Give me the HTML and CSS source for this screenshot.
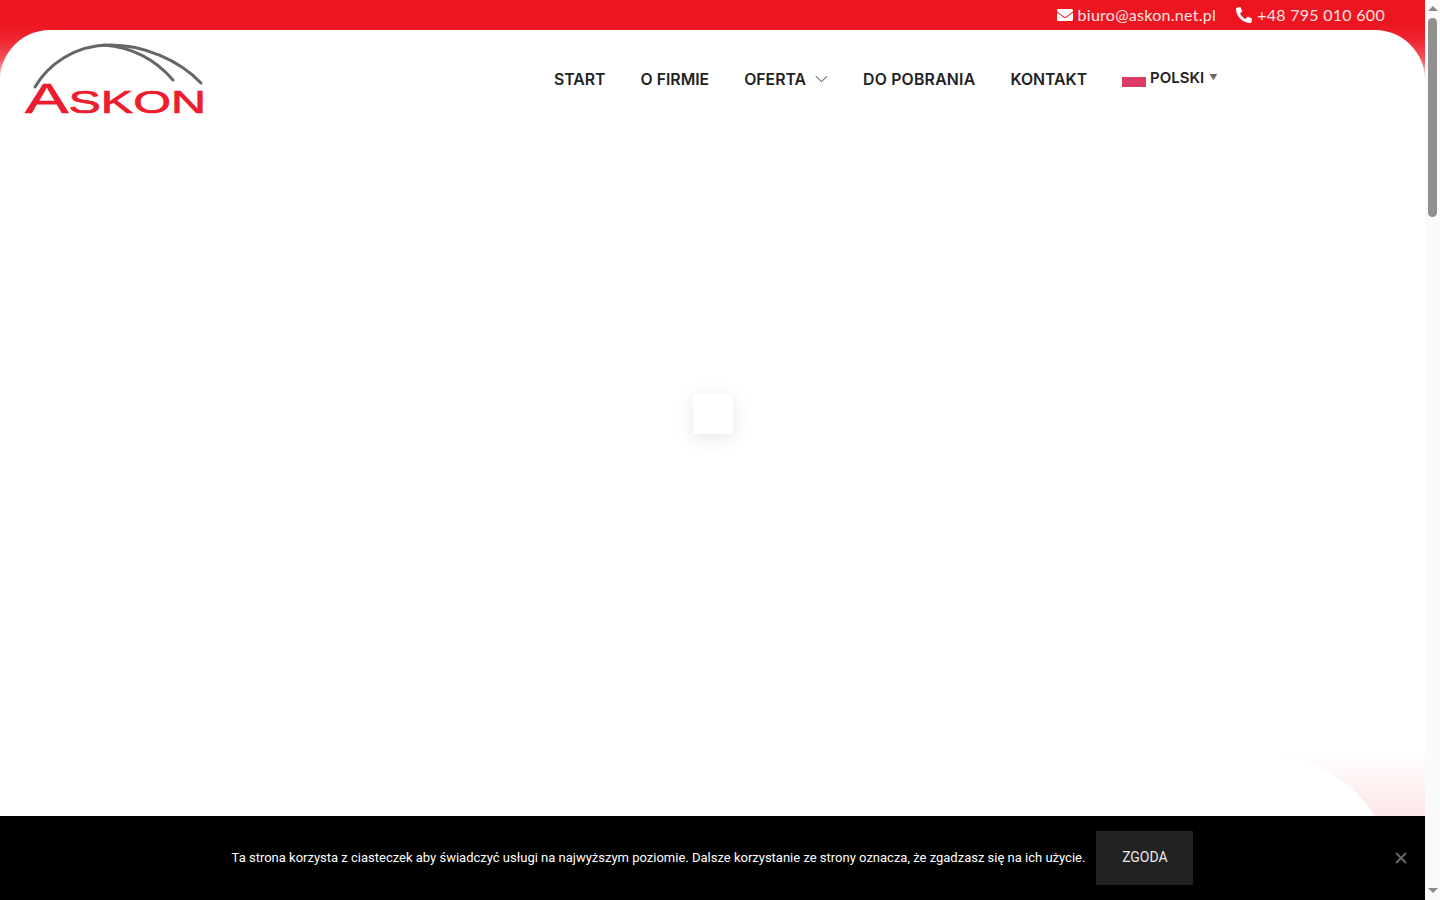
FILE: index.html
```html
<!DOCTYPE html>
<html lang="pl">
<head>
    <meta charset="UTF-8">
    <meta name="viewport" content="width=device-width, initial-scale=1.0">
    <title>Askon</title>
    <link rel="stylesheet" href="styles.css">
</head>
<body>
<div class="page">
    <div class="main">
        <!-- Naglowek -->
        <header class="header">
            <div class="topbar">
                <a class="contact">
                    <svg class="icon" viewBox="0 0 512 512"><path d="M502.3 190.8c3.9-3.1 9.7-.2 9.7 4.7V400c0 26.5-21.5 48-48 48H48c-26.5 0-48-21.5-48-48V195.6c0-5 5.7-7.8 9.7-4.7 22.4 17.4 52.1 39.5 154.1 113.6 21.1 15.4 56.7 47.8 92.2 47.6 35.7.3 72-32.8 92.3-47.6 102-74.1 131.6-96.3 154-113.7zM256 320c23.2.4 56.6-29.2 73.4-41.4 132.7-96.3 142.8-104.7 173.4-128.7 5.8-4.5 9.2-11.5 9.2-18.9v-19c0-26.5-21.5-48-48-48H48C21.5 64 0 85.5 0 112v19c0 7.4 3.4 14.3 9.2 18.9 30.6 23.9 40.7 32.4 173.4 128.7 16.8 12.2 50.2 41.8 73.4 41.4z"/></svg>
                    <span class="contact-text">biuro@askon.net.pl</span>
                </a>
                <a class="contact">
                    <svg class="icon" viewBox="0 0 512 512"><path transform="matrix(-1 0 0 1 512 0)" d="M493.4 24.6l-104-24c-11.3-2.6-22.9 3.3-27.5 13.9l-48 112c-4.2 9.8-1.4 21.3 6.9 28l60.6 49.6c-36 76.7-98.9 140.5-177.2 177.2l-49.6-60.6c-6.8-8.3-18.2-11.1-28-6.9l-112 48C3.9 366.5-2 378.1.6 389.4l24 104C27.1 504.2 36.7 512 48 512c256.1 0 464-207.5 464-464 0-11.2-7.7-20.9-18.6-23.4z"/></svg>
                    <span class="contact-text">+48 795 010 600</span>
                </a>
            </div>
            <div class="head">
                <svg class="logo" viewBox="0 0 182 74">
                    <path class="logo-arc" d="M11 45C24 23 50 3 86 3c34 0 69 15 91 38"/>
                    <path class="logo-arc" d="M80 3c25 2 50 13 69 35"/>
                    <text class="logo-text" x="1" y="71" textLength="181" lengthAdjust="spacingAndGlyphs"><tspan class="logo-big">A</tspan>SKON</text>
                </svg>
                <nav class="nav">
                    <a>START</a>
                    <a>O FIRMIE</a>
                    <a class="has-sub">OFERTA
                        <svg class="chevron" viewBox="0 0 14 8"><path d="M1 1l6 6 6-6"/></svg>
                    </a>
                    <a class="wide">DO POBRANIA</a>
                    <a>KONTAKT</a>
                    <a class="lang">
                        <span class="flag"></span>
                        <span class="lang-name">POLSKI</span>
                        <span class="lang-arrow">▼</span>
                    </a>
                </nav>
            </div>
        </header>

        <div class="content">
            <div class="loader"></div>
        </div>

        <div class="corner"><div class="corner-white"></div></div>

        <!-- Ciasteczka -->
        <div class="cookie">
            <span class="cookie-text">Ta strona korzysta z ciasteczek aby świadczyć usługi na najwyższym poziomie. Dalsze korzystanie ze strony oznacza, że zgadzasz się na ich użycie.</span>
            <button class="cookie-btn">ZGODA</button>
            <svg class="cookie-close" viewBox="0 0 12 12"><path d="M1 1l10 10M11 1L1 11"/></svg>
        </div>
    </div>

    <div class="scrollbar">
        <span class="arrow-up"></span>
        <span class="thumb"></span>
        <span class="arrow-down"></span>
    </div>
</div>
</body>
</html>
```

FILE: styles.css
```css
* { box-sizing: border-box; }
html, body { margin: 0; height: 100%; overflow: hidden; }
body { font-family: "Lato", sans-serif; background: #fff; color: #222; }

.page { display: flex; height: 900px; }
.main { flex: 1; display: flex; flex-direction: column; min-width: 0; }

/* Naglowek */
.header { background: linear-gradient(#ec1520 0, #ec1520 22px, #ee2530 40px, #f4545c 60px, #fff 82px); }
.topbar { height: 30px; display: flex; justify-content: flex-end; align-items: center; gap: 20px; padding-right: 40px; }
.contact { display: flex; align-items: center; gap: 5px; color: #fde3e4; font-size: 16px; letter-spacing: 0.28px; }
.contact-text { margin-top: -1px; }
.icon { width: 16px; height: 16px; fill: #fff; }

.head { display: flex; height: 92px; padding-left: 24px; background: #fff; border-radius: 50px 50px 0 0; }
.logo { width: 182px; height: 74px; margin-top: 12px; overflow: visible; }
.logo-arc { fill: none; stroke: #666; stroke-width: 3; stroke-linecap: round; }
.logo-text { font-family: "Liberation Sans", Arial, sans-serif; font-size: 32px; fill: #ed1c2e; stroke: #ed1c2e; stroke-width: 0.7; }
.logo-big { font-size: 43px; }

.nav { display: flex; align-items: center; gap: 35px; margin-left: 348px; height: 98px; font-family: "Inter", sans-serif; font-size: 15.8px; font-weight: 600; color: #222; }
.wide { letter-spacing: 0.22px; }
.has-sub { display: flex; align-items: center; gap: 9px; }
.chevron { width: 13px; height: 8px; fill: none; stroke: #222; stroke-width: 1; }
.lang { display: flex; align-items: center; gap: 4px; }
.flag { width: 24px; height: 20px; margin-top: -4px; background: linear-gradient(#fff 50%, #dc3c63 50%); }
.lang-name { margin-top: -4px; font-size: 15px; }
.lang-arrow { margin: -4px 0 0 1px; font-size: 8px; color: #666; }

/* Srodek */
.content { flex: 1; display: flex; justify-content: center; padding-top: 272px; }
.loader { width: 40px; height: 40px; background: #fff; border-radius: 2px; box-shadow: 0 4px 20px rgba(0, 0, 0, 0.1); }

.corner { align-self: flex-end; width: 175px; height: 66px; background: linear-gradient(#fff, #fde6e7); overflow: hidden; }
.corner-white { width: 145px; height: 134px; background: #fff; border-top-right-radius: 145px 134px; }

/* Ciasteczka */
.cookie { position: relative; height: 84px; flex-shrink: 0; display: flex; justify-content: center; align-items: center; gap: 11px; background: #000; color: #fff; font-family: "Roboto", sans-serif; font-size: 13px; }
.cookie-text { margin-top: -2px; }
.cookie-btn { width: 97px; height: 54px; padding: 0 0 2px; border: none; background: #222; color: #e8e8e8; font-family: "Roboto", sans-serif; font-size: 14px; }
.cookie-close { position: absolute; right: 18px; top: 36px; width: 12px; height: 12px; fill: none; stroke: #666; stroke-width: 2; }

/* Pasek przewijania */
.scrollbar { width: 15px; display: flex; flex-direction: column; align-items: center; background: #fafafa; }
.arrow-up { margin-top: 6px; border: 5px solid transparent; border-top: 0; border-bottom: 5px solid #8a8a8a; }
.thumb { width: 9px; height: 199px; margin-top: 7px; background: #909090; border-radius: 5px; }
.arrow-down { margin-top: auto; margin-bottom: 7px; border: 5px solid transparent; border-bottom: 0; border-top: 5px solid #8a8a8a; }
```
